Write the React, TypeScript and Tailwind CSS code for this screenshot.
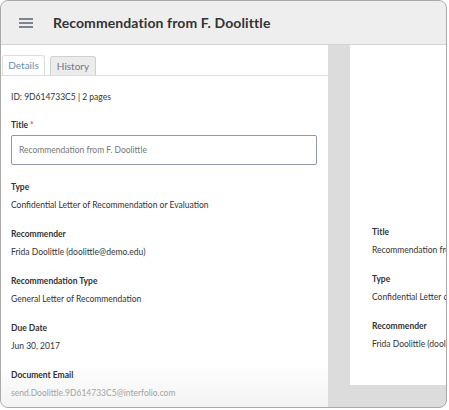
import { Fragment } from 'react';

const fields = [
  { label: 'Type', value: 'Confidential Letter of Recommendation or Evaluation' },
  { label: 'Recommender', value: 'Frida Doolittle (doolittle@demo.edu)' },
  { label: 'Recommendation Type', value: 'General Letter of Recommendation' },
  { label: 'Due Date', value: 'Jun 30, 2017' },
];

const previewFields = [
  { label: 'Title', value: 'Recommendation from F. Doolittle' },
  { label: 'Type', value: 'Confidential Letter of Recommendation or Evaluation' },
  { label: 'Recommender', value: 'Frida Doolittle (doolittle@demo.edu)' },
];

function MenuIcon() {
  return (
    <svg width="14" height="10" viewBox="0 0 14 10" className="shrink-0">
      <rect x="0" y="0" width="14" height="2" fill="#7c8590" />
      <rect x="0" y="4" width="14" height="2" fill="#7c8590" />
      <rect x="0" y="8" width="14" height="2" fill="#7c8590" />
    </svg>
  );
}

export default function App() {
  return (
    <div className="h-[410px] w-[449px] bg-white" style={{ fontFamily: "Lato, 'Open Sans', sans-serif" }}>
      <div className="flex h-[408px] w-[447px] flex-col overflow-hidden rounded-[8px] border border-[#a9a9a9] bg-[#dcdcdc]">
        {/* header */}
        <div className="flex h-[44px] shrink-0 items-center gap-[20px] border-b border-[#d4d4d4] bg-[#eeeeee] pl-[18px]">
          <MenuIcon />
          <h1 className="text-[14px] font-bold tracking-[0.1px] text-[#333333]">
            Recommendation from F. Doolittle
          </h1>
        </div>

        <div className="flex min-h-0 flex-1">
          {/* details panel */}
          <div className="flex w-[327px] shrink-0 flex-col bg-gradient-to-b from-white from-[88%] to-[#f3f3f3]">
            <div className="mt-[11px] flex h-[20px] items-end gap-[5px] border-b border-[#dddddd] pl-[1px]">
              <div className="flex h-[20px] w-[43px] items-center justify-center rounded-t-[3px] border border-b-0 border-[#dddddd] bg-white text-[10px] text-[#6a8db0]">
                Details
              </div>
              <div className="flex h-[19px] w-[46px] items-center justify-center rounded-t-[3px] border border-b-0 border-[#d0d0d0] bg-[#ececec] text-[10px] text-[#777777]">
                History
              </div>
            </div>

            <div className="flex flex-col px-[10px] text-[8.5px] text-[#333333]">
              <p className="mt-[15px] leading-[12px]">ID: 9D614733C5 | 2 pages</p>

              <p className="mt-[16px] font-bold leading-[12px]">
                Title <span className="text-[#d9534f]">*</span>
              </p>
              <div className="mt-[4px] flex h-[30px] w-[306px] items-center rounded-[2px] border border-[#8e9ba6] px-[7px] text-[#777777]">
                Recommendation from F. Doolittle
              </div>

              {fields.map((f, i) => (
                <Fragment key={f.label}>
                  <p className={`${i === 0 ? 'mt-[16px]' : 'mt-[17px]'} font-bold leading-[12px]`}>{f.label}</p>
                  <p className="mt-[6px] leading-[12px]">{f.value}</p>
                </Fragment>
              ))}

              <p className="mt-[17px] font-bold leading-[12px]">Document Email</p>
              <p className="mt-[6px] leading-[12px] text-[#a3a3a3]">send.Doolittle.9D614733C5@interfolio.com</p>
            </div>
          </div>

          {/* preview */}
          <div className="ml-[22px] flex min-w-0 flex-1 flex-col pb-[22px]">
            <div className="flex flex-1 flex-col overflow-hidden bg-white pl-[22px] pt-[181px] text-[8.5px] text-[#333333]">
              {previewFields.map((f, i) => (
                <Fragment key={f.label}>
                  <p className={`${i === 0 ? '' : 'mt-[17px]'} whitespace-nowrap font-bold leading-[12px]`}>{f.label}</p>
                  <p className="mt-[6px] whitespace-nowrap leading-[12px]">{f.value}</p>
                </Fragment>
              ))}
            </div>
          </div>
        </div>
      </div>
    </div>
  );
}
